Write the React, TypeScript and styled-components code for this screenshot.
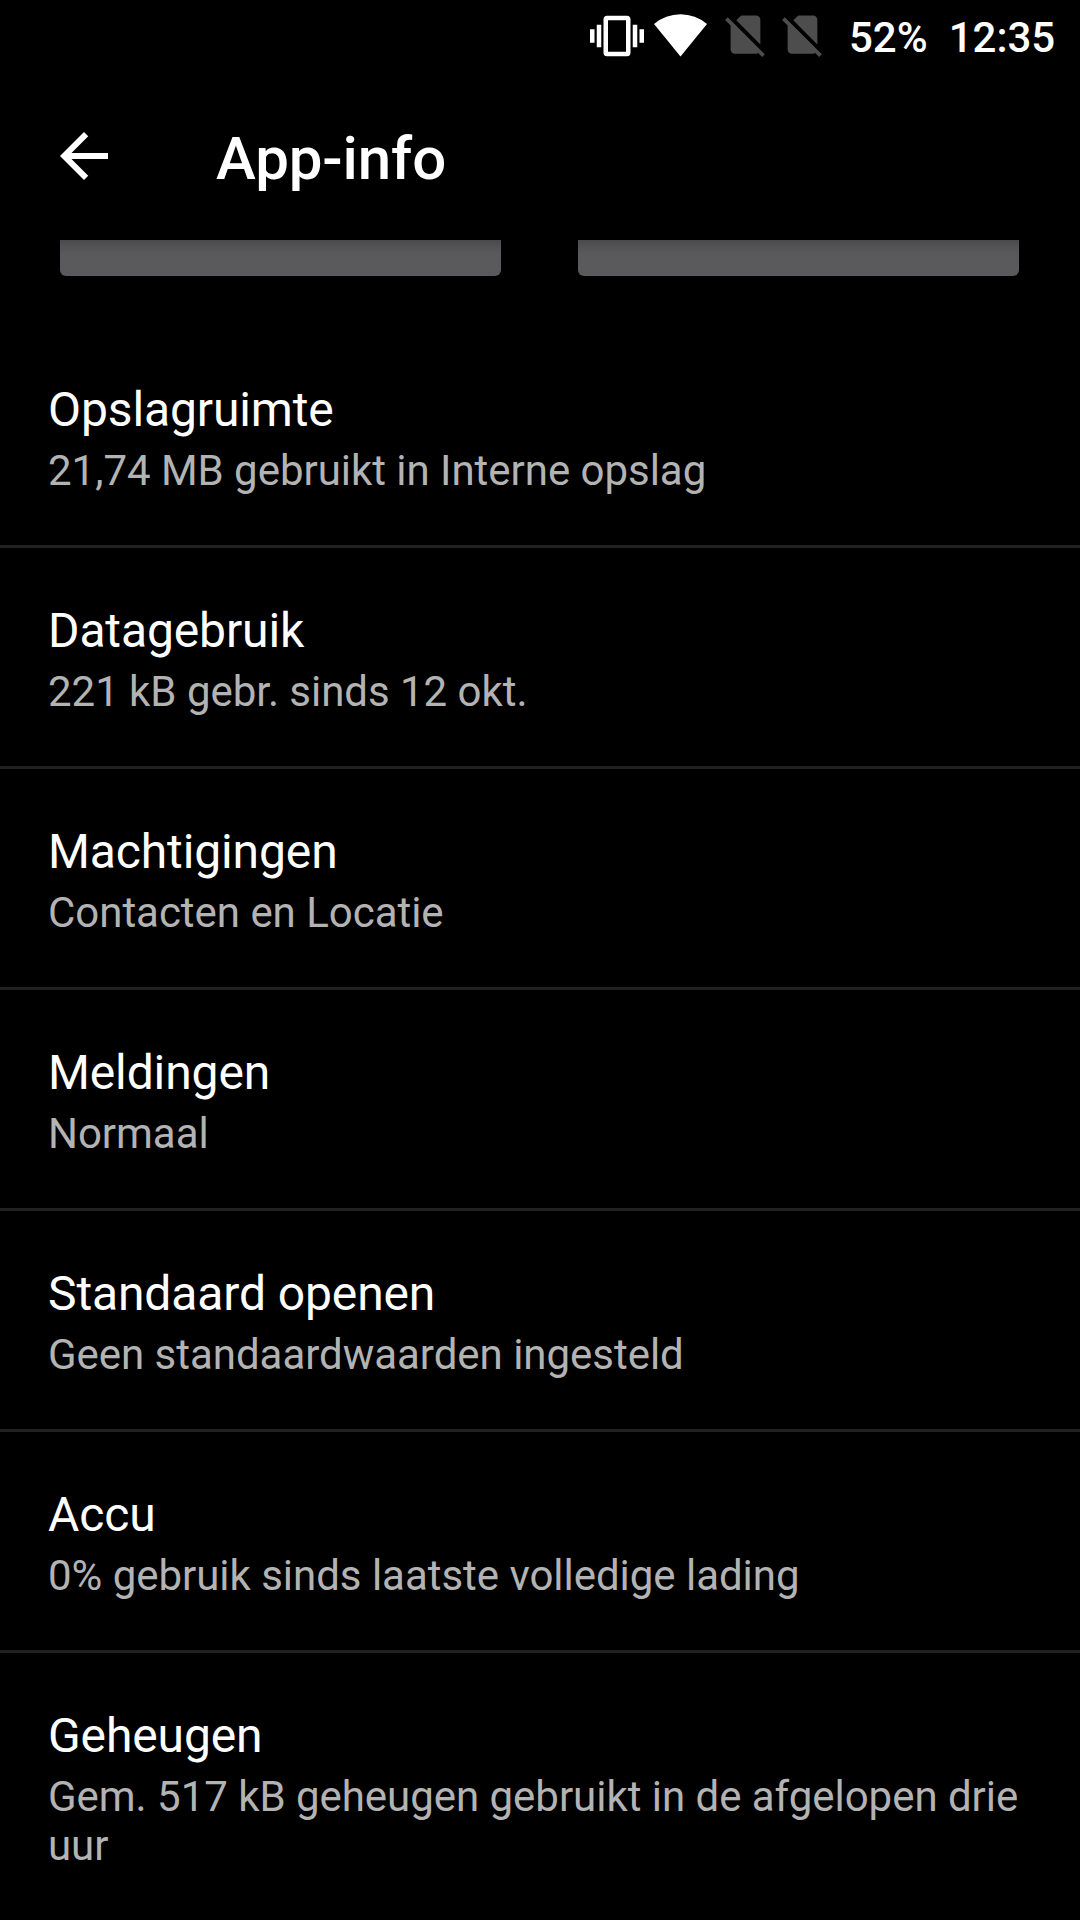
import React from 'react';
import styled, { createGlobalStyle } from 'styled-components';

const GlobalStyle = createGlobalStyle`
  * { box-sizing: border-box; }
  body { margin: 0; background: #000; overflow: hidden; }
`;

const Screen = styled.div`
  width: 1080px;
  height: 1920px;
  background: #000;
  color: #fff;
  font-family: Roboto, "Noto Sans", sans-serif;
  display: flex;
  flex-direction: column;
  overflow: hidden;
`;

const StatusBar = styled.header`
  height: 72px;
  flex: none;
  display: flex;
  align-items: flex-start;
  padding: 9px 0 0 590px;
`;

const StatusIcon = styled.svg<{ $gap?: number; $muted?: boolean }>`
  flex: none;
  display: block;
  margin-left: ${(p) => p.$gap ?? 0}px;
  fill: ${(p) => (p.$muted ? '#4d4d4d' : '#fff')};
`;

const StatusText = styled.span<{ $gap: number }>`
  margin: 4px 0 0 ${(p) => p.$gap}px;
  font-size: 42px;
  line-height: 49px;
  font-weight: 500;
  white-space: nowrap;
`;

const AppBar = styled.nav`
  height: 168px;
  flex: none;
  display: flex;
  align-items: flex-start;
  padding: 48px 48px 0;
`;

const BackButton = styled.button`
  width: 72px;
  height: 72px;
  padding: 0;
  border: 0;
  background: none;
  svg { display: block; fill: #fff; }
`;

const Title = styled.h1`
  margin: 4px 0 0 96px;
  font-size: 60px;
  line-height: 70px;
  font-weight: 500;
  letter-spacing: -0.12px;
`;

const Actions = styled.div`
  height: 87px;
  flex: none;
  display: flex;
  align-items: flex-start;
  gap: 77px;
  padding-left: 60px;
`;

const ActionButton = styled.button`
  width: 441px;
  height: 36px;
  padding: 0;
  border: 0;
  border-radius: 0 0 6px 6px;
  background: linear-gradient(#4a494b, #525153 6px, #59585a 13px, #5a595b 18px);
`;

const List = styled.main`
  display: flex;
  flex-direction: column;
`;

const Row = styled.section`
  min-height: 221px;
  padding: 55px 48px 50px;
  display: flex;
  flex-direction: column;
  gap: 8px;
  border-bottom: 3px solid #212121;
  &:last-child { border-bottom: 0; }
`;

const RowTitle = styled.h2`
  margin: 0;
  font-size: 48px;
  line-height: 56px;
  font-weight: 400;
  letter-spacing: -0.12px;
`;

const Summary = styled.p`
  margin: 0;
  font-size: 42px;
  line-height: 49px;
  letter-spacing: -0.03px;
  color: #b3b3b3;
`;

const items = [
  { title: 'Opslagruimte', summary: '21,74 MB gebruikt in Interne opslag' },
  { title: 'Datagebruik', summary: '221 kB gebr. sinds 12 okt.' },
  { title: 'Machtigingen', summary: 'Contacten en Locatie' },
  { title: 'Meldingen', summary: 'Normaal' },
  { title: 'Standaard openen', summary: 'Geen standaardwaarden ingesteld' },
  { title: 'Accu', summary: '0% gebruik sinds laatste volledige lading' },
  { title: 'Geheugen', summary: 'Gem. 517 kB geheugen gebruikt in de afgelopen drie uur' },
];

const NoSim = ({ gap }: { gap: number }) => (
  <StatusIcon $gap={gap} $muted width="51" height="51" viewBox="0 0 24 24">
    <path d="M18.99 5c0-1.1-.89-2-1.99-2h-7L7.66 5.34 19 16.68 18.99 5zM3.65 3.88L2.38 5.15 5 7.77V19c0 1.1.9 2 2 2h10.01c.35 0 .67-.1.96-.26l1.88 1.88 1.27-1.27L3.65 3.88z" />
  </StatusIcon>
);

export default function App() {
  return (
    <>
      <GlobalStyle />
      <Screen>
        <StatusBar>
          <StatusIcon width="54" height="54" viewBox="0 0 24 24">
            <path d="M0 15h2V9H0v6zm3 2h2V7H3v10zm19-8v6h2V9h-2zm-3 8h2V7h-2v10zM16.5 3h-9C6.67 3 6 3.67 6 4.5v15c0 .83.67 1.5 1.5 1.5h9c.83 0 1.5-.67 1.5-1.5v-15c0-.83-.67-1.5-1.5-1.5zM16 19H8V5h8v14z" />
          </StatusIcon>
          <StatusIcon $gap={10} width="53" height="48" viewBox="0 0 53 48">
            <path d="M0 15A41 41 0 0 1 53 15L26.5 47.5z" />
          </StatusIcon>
          <NoSim gap={13} />
          <NoSim gap={6} />
          <StatusText $gap={21}>52%</StatusText>
          <StatusText $gap={21}>12:35</StatusText>
        </StatusBar>
        <AppBar>
          <BackButton aria-label="Terug">
            <svg width="72" height="72" viewBox="0 0 24 24">
              <path d="M20 11H7.83l5.59-5.59L12 4l-8 8 8 8 1.41-1.41L7.83 13H20v-2z" />
            </svg>
          </BackButton>
          <Title>App-info</Title>
        </AppBar>
        <Actions>
          <ActionButton />
          <ActionButton />
        </Actions>
        <List>
          {items.map((item) => (
            <Row key={item.title}>
              <RowTitle>{item.title}</RowTitle>
              <Summary>{item.summary}</Summary>
            </Row>
          ))}
        </List>
      </Screen>
    </>
  );
}
